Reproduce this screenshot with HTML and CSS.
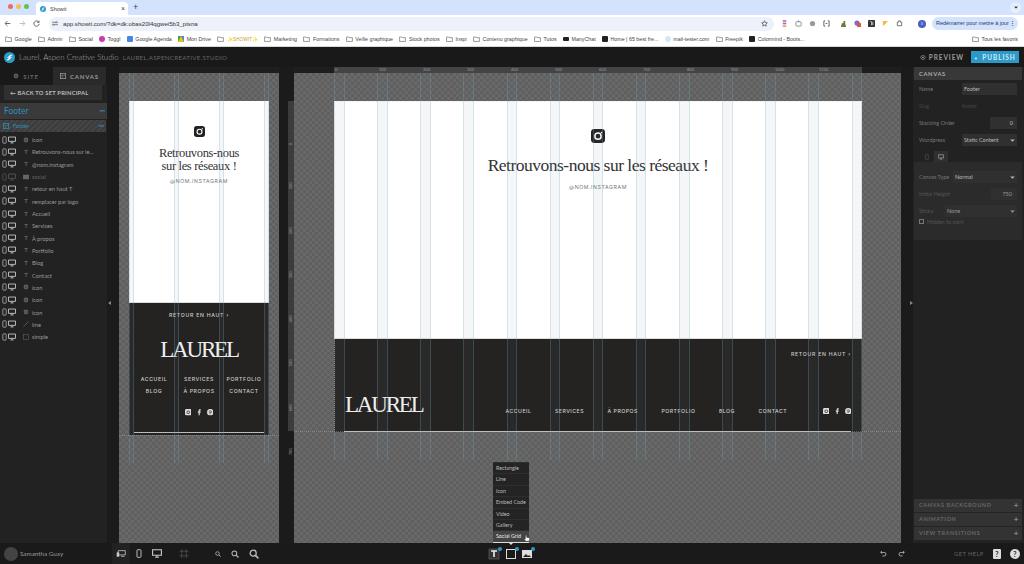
FILE: index.html
```html
<!DOCTYPE html>
<html lang="fr">
<head>
  <meta charset="UTF-8" />
  <title>Showit</title>
  <link rel="stylesheet" href="styles.css">
</head>
<body>
  <svg class="sprite" xmlns="http://www.w3.org/2000/svg">
    <symbol id="i-logo" viewBox="0 0 12 12"><circle cx="6" cy="6" r="6" fill="#2a9bcb"/><path d="M3 6.500l4-3.500h2.500L6 6zM9 5.500L5 9H2.500L6 6z" fill="#fff"/></symbol>
    <symbol id="i-folder" viewBox="0 0 12 10"><path d="M1 1.500h3.500l1 1.200H11v6.500H1z" fill="none" stroke="currentColor" stroke-width="1"/></symbol>
    <symbol id="i-phone" viewBox="0 0 6 9"><rect x="1" y="0.700" width="4" height="7.600" rx="0.700" fill="none" stroke="currentColor" stroke-width="0.900"/></symbol>
    <symbol id="i-desktop" viewBox="0 0 10 9"><path d="M0.600 0.800h8.800v5.400H0.600z" fill="none" stroke="currentColor" stroke-width="1.100"/><path d="M3 8.200h4M5 6.200v2" stroke="currentColor" stroke-width="1"/></symbol>
    <symbol id="i-globe" viewBox="0 0 8 8"><circle cx="4" cy="4" r="3.200" fill="currentColor"/><path d="M1 4h6M4 1v6" stroke="#222" stroke-width="0.500"/></symbol>
    <symbol id="i-insta" viewBox="0 0 14 14"><rect width="14" height="14" rx="3.400" fill="currentColor"/><circle cx="7" cy="7.200" r="3.100" fill="none" stroke="#fff" stroke-width="1.500"/><circle cx="10.600" cy="3.500" r="0.800" fill="#fff"/></symbol>
    <symbol id="i-small-insta" viewBox="0 0 8 8"><rect width="8" height="8" rx="1.800" fill="#ddd"/><circle cx="4" cy="4" r="1.700" fill="none" stroke="#252322" stroke-width="0.900"/></symbol>
    <symbol id="i-fb" viewBox="0 0 8 8"><path d="M3.200 8V4.500H2.200V3.200h1V2.200C3.200 1 3.900.4 5 .4h.9v1.300h-.6c-.5 0-.7.2-.7.6v.9h1.300l-.2 1.300H4.600V8z" fill="#ddd"/></symbol>
    <symbol id="i-pin" viewBox="0 0 8 8"><circle cx="4" cy="4" r="3.900" fill="#ddd"/><path d="M3.400 6.600l.8-3.400M2.800 4.300c-.7-1.200.2-2.200 1.300-2.200 1.200 0 1.800 1 1.400 2-.3.800-1.200 1-1.600.4" fill="none" stroke="#252322" stroke-width="0.700"/></symbol>
    <symbol id="i-zoom" viewBox="0 0 10 10"><circle cx="4.200" cy="4.200" r="3" fill="none" stroke="currentColor" stroke-width="1.300"/><path d="M6.400 6.400l3 3" stroke="currentColor" stroke-width="1.500"/></symbol>
    <symbol id="i-caret" viewBox="0 0 6 4"><path d="M0 0.500h6L3 3.800z" fill="currentColor"/></symbol>
  </svg>

  <div class="tabstrip">
    <div class="lights"><i class="red"></i><i class="amber"></i><i class="green"></i></div>
    <div class="tab">
      <svg class="fav"><use href="#i-logo"/></svg>
      <span class="tab-title">Showit</span>
      <span class="tab-close">×</span>
    </div>
    <span class="tab-new">+</span>
    <span class="tab-menu"><svg viewBox="0 0 6 4"><use href="#i-caret"/></svg></span>
  </div>

  <div class="toolbar">
    <svg class="nav-ico" viewBox="0 0 10 10"><path d="M9 5H2M5 1.500L1.500 5 5 8.500" fill="none" stroke="#444" stroke-width="1.100"/></svg>
    <svg class="nav-ico" viewBox="0 0 10 10"><path d="M1 5h7M5 1.500L8.500 5 5 8.500" fill="none" stroke="#aaa" stroke-width="1.100"/></svg>
    <svg class="nav-ico" viewBox="0 0 10 10"><path d="M8.300 3.200A3.800 3.800 0 1 0 8.800 5.500M8.600 1v2.500H6.100" fill="none" stroke="#444" stroke-width="1.100"/></svg>
    <div class="omnibox">
      <svg class="tune" viewBox="0 0 10 8"><path d="M0 2h6M8 2h2M0 6h2M4 6h6" stroke="#444" stroke-width="1"/><circle cx="7" cy="2" r="1.200" fill="none" stroke="#444" stroke-width=".8"/><circle cx="3" cy="6" r="1.200" fill="none" stroke="#444" stroke-width=".8"/></svg>
      <span class="url">app.showit.com/?dk=dk:obas20l4qgwei5b3_ptsna</span>
      <svg class="star" viewBox="0 0 10 10"><path d="M5 1l1.200 2.700 2.800.3-2.100 1.900.6 2.900L5 7.300 2.500 8.800l.6-2.900L1 4l2.800-.3z" fill="none" stroke="#444" stroke-width="1"/></svg>
    </div>
    <div class="exts">
      <svg viewBox="0 0 8 8"><rect x="2" y="0" width="4" height="2" fill="#ef5da8"/><rect x="2" y="3" width="4" height="2" fill="#7a7aee"/><rect x="2" y="6" width="4" height="2" fill="#f5a25d"/></svg>
      <svg viewBox="0 0 8 8"><rect x="1" y="2" width="6" height="5" rx="1" fill="none" stroke="#888"/><path d="M3 2l.5-1h1l.5 1" stroke="#888" fill="none"/></svg>
      <svg viewBox="0 0 8 8"><circle cx="4" cy="4" r="3" fill="#999"/></svg>
      <svg viewBox="0 0 8 8"><path d="M2.500 1H1v6h1.500M5.500 1H7v6H5.500M3 4h2" fill="none" stroke="#555"/></svg>
      <svg class="wide" viewBox="0 0 8 8"><path d="M1 8l1-4 2-1V1h2v3l1 4z" fill="#6c7a3e"/></svg>
      <svg viewBox="0 0 8 8"><circle cx="3.500" cy="3.500" r="3" fill="#7a68d8"/><rect x="3.500" y="3.500" width="4.500" height="4.500" fill="#e8542f"/></svg>
      <svg viewBox="0 0 8 8"><rect width="8" height="8" rx="1" fill="#333"/><path d="M2 2h2v4M5.500 2v4" stroke="#fff" stroke-width=".8"/></svg>
      <svg viewBox="0 0 8 8"><path d="M1 1h6L1 7z" fill="#f5b942"/></svg>
      <svg viewBox="0 0 8 8"><path d="M1.500 2.500h1.500V1h2v1.500h1.500v4h-5z" fill="none" stroke="#666"/></svg>
    </div>
    <span class="avatar">S</span>
    <div class="update"><span>Redémarrer pour mettre à jour</span><b>⋮</b></div>
  </div>

  <div class="bookmarks">
    <span class="bm"><svg class="folder"><use href="#i-folder"/></svg>Google</span>
    <span class="bm"><svg class="folder"><use href="#i-folder"/></svg>Admin</span>
    <span class="bm"><svg class="folder"><use href="#i-folder"/></svg>Social</span>
    <span class="bm"><i class="dot toggl"></i>Toggl</span>
    <span class="bm"><i class="dot agenda"></i>Google Agenda</span>
    <span class="bm"><i class="drive"></i>Mon Drive</span>
    <span class="bm"><svg class="folder"><use href="#i-folder"/></svg><em>✨SHOWIT✨</em></span>
    <span class="bm"><svg class="folder"><use href="#i-folder"/></svg>Marketing</span>
    <span class="bm"><svg class="folder"><use href="#i-folder"/></svg>Formations</span>
    <span class="bm"><svg class="folder"><use href="#i-folder"/></svg>Veille graphique</span>
    <span class="bm"><svg class="folder"><use href="#i-folder"/></svg>Stock photos</span>
    <span class="bm"><svg class="folder"><use href="#i-folder"/></svg>Inspi</span>
    <span class="bm"><svg class="folder"><use href="#i-folder"/></svg>Contenu graphique</span>
    <span class="bm"><svg class="folder"><use href="#i-folder"/></svg>Tutos</span>
    <span class="bm"><i class="dot many"></i>ManyChat</span>
    <span class="bm"><i class="dot home"></i>Home | 65 best fre...</span>
    <span class="bm"><i class="dot mail"></i>mail-tester.com</span>
    <span class="bm"><svg class="folder"><use href="#i-folder"/></svg>Freepik</span>
    <span class="bm"><i class="dot color"></i>Colormind - Boots...</span>
    <span class="bm bm-end"><svg class="folder"><use href="#i-folder"/></svg>Tous les favoris</span>
  </div>

  <header class="appbar">
    <svg class="logo"><use href="#i-logo"/></svg>
    <span class="site-name">Laurel, Aspen Creative Studio</span>
    <span class="site-url">LAUREL.ASPENCREATIVE.STUDIO</span>
    <span class="preview">
      <svg viewBox="0 0 10 7"><path d="M0.500 3.500C2 1 3.500.5 5 .5s3 .5 4.500 3C8 6 6.500 6.500 5 6.500S2 6 .5 3.500z" fill="none" stroke="#bbb"/><circle cx="5" cy="3.500" r="1.300" fill="#bbb"/></svg>
      PREVIEW
    </span>
    <button class="publish"><span>♦</span> PUBLISH</button>
  </header>

  <main class="workspace">
    <aside class="layers-panel">
      <div class="panel-tabs">
        <div class="panel-tab"><svg class="tab-ico" viewBox="0 0 8 8"><use href="#i-globe"/></svg>SITE</div>
        <div class="panel-tab active"><svg class="tab-ico" viewBox="0 0 8 8"><rect x=".5" y=".5" width="7" height="7" fill="none" stroke="currentColor"/><path d="M.5 3h7M3 3v4.500" stroke="currentColor" stroke-width=".7"/></svg>CANVAS</div>
      </div>
      <div class="back-set">← BACK TO SET PRINCIPAL</div>
      <div class="set-row"><span>Footer</span><b>•••</b></div>
      <div class="canvas-row"><svg viewBox="0 0 8 8"><rect x=".5" y=".5" width="7" height="7" fill="none" stroke="currentColor"/><path d="M.5 3h7M3 3v4.500" stroke="currentColor" stroke-width=".7"/></svg><span>Footer</span><b>•••</b></div>
      <ul class="layers">
        <li><svg class="l-phone"><use href="#i-phone"/></svg><svg class="l-desk"><use href="#i-desktop"/></svg><svg class="l-type"><use href="#i-globe"/></svg>icon</li>
        <li><svg class="l-phone"><use href="#i-phone"/></svg><svg class="l-desk"><use href="#i-desktop"/></svg><i class="l-type">T</i>Retrouvons-nous sur le...</li>
        <li><svg class="l-phone"><use href="#i-phone"/></svg><svg class="l-desk"><use href="#i-desktop"/></svg><i class="l-type">T</i>@nom.instagram</li>
        <li class="off"><svg class="l-phone"><use href="#i-phone"/></svg><svg class="l-desk"><use href="#i-desktop"/></svg><svg class="l-type" viewBox="0 0 8 8"><rect y="1" width="8" height="6" fill="currentColor"/></svg>social</li>
        <li><svg class="l-phone"><use href="#i-phone"/></svg><svg class="l-desk"><use href="#i-desktop"/></svg><i class="l-type">T</i>retour en haut T</li>
        <li><svg class="l-phone"><use href="#i-phone"/></svg><svg class="l-desk"><use href="#i-desktop"/></svg><i class="l-type">T</i>remplacer par logo</li>
        <li><svg class="l-phone"><use href="#i-phone"/></svg><svg class="l-desk"><use href="#i-desktop"/></svg><i class="l-type">T</i>Accueil</li>
        <li><svg class="l-phone"><use href="#i-phone"/></svg><svg class="l-desk"><use href="#i-desktop"/></svg><i class="l-type">T</i>Services</li>
        <li><svg class="l-phone"><use href="#i-phone"/></svg><svg class="l-desk"><use href="#i-desktop"/></svg><i class="l-type">T</i>À propos</li>
        <li><svg class="l-phone"><use href="#i-phone"/></svg><svg class="l-desk"><use href="#i-desktop"/></svg><i class="l-type">T</i>Portfolio</li>
        <li><svg class="l-phone"><use href="#i-phone"/></svg><svg class="l-desk"><use href="#i-desktop"/></svg><i class="l-type">T</i>Blog</li>
        <li><svg class="l-phone"><use href="#i-phone"/></svg><svg class="l-desk"><use href="#i-desktop"/></svg><i class="l-type">T</i>Contact</li>
        <li><svg class="l-phone"><use href="#i-phone"/></svg><svg class="l-desk"><use href="#i-desktop"/></svg><svg class="l-type"><use href="#i-globe"/></svg>icon</li>
        <li><svg class="l-phone"><use href="#i-phone"/></svg><svg class="l-desk"><use href="#i-desktop"/></svg><svg class="l-type"><use href="#i-globe"/></svg>icon</li>
        <li><svg class="l-phone"><use href="#i-phone"/></svg><svg class="l-desk"><use href="#i-desktop"/></svg><svg class="l-type"><use href="#i-globe"/></svg>icon</li>
        <li><svg class="l-phone"><use href="#i-phone"/></svg><svg class="l-desk"><use href="#i-desktop"/></svg><svg class="l-type" viewBox="0 0 8 8"><path d="M.5 7.500l7-7" stroke="currentColor"/></svg>line</li>
        <li><svg class="l-phone"><use href="#i-phone"/></svg><svg class="l-desk"><use href="#i-desktop"/></svg><svg class="l-type" viewBox="0 0 8 8"><rect x=".5" y=".5" width="7" height="7" fill="none" stroke="currentColor" stroke-width=".7"/></svg>simple</li>
      </ul>
    </aside>

    <div class="strip"><span class="arrow-l"></span></div>

    <section class="stage stage-mobile">
      <div class="guides guides-mobile"><i></i><i></i><i></i><i></i></div>
      <div class="board board-mobile">
        <div class="board-top">
          <svg class="insta"><use href="#i-insta"/></svg>
          <h2>Retrouvons-nous<br>sur les réseaux !</h2>
          <p class="handle">@NOM.INSTAGRAM</p>
        </div>
        <div class="board-foot">
          <p class="up">RETOUR EN HAUT ›</p>
          <div class="brand">LAUREL</div>
          <nav class="foot-grid">
            <span>ACCUEIL</span><span>SERVICES</span><span>PORTFOLIO</span>
            <span>BLOG</span><span>À PROPOS</span><span>CONTACT</span>
          </nav>
          <div class="socials">
            <svg><use href="#i-small-insta"/></svg><svg><use href="#i-fb"/></svg><svg><use href="#i-pin"/></svg>
          </div>
        </div>
      </div>
    </section>

    <div class="gap"></div>

    <section class="stage stage-desktop">
      <div class="ruler-top">
        <span>0</span><span>100</span><span>200</span><span>300</span><span>400</span><span>500</span><span>600</span><span>700</span><span>800</span><span>900</span><span>1000</span><span>1100</span>
      </div>
      <div class="ruler-left">
        <span>0</span><span>100</span><span>200</span><span>300</span><span>400</span><span>500</span><span>600</span><span>700</span>
      </div>
      <div class="guides guides-desktop"><i></i><i></i><i></i><i></i><i></i><i></i><i></i><i></i><i></i><i></i><i></i><i></i><i></i></div>
      <div class="board board-desktop">
        <div class="board-top">
          <svg class="insta"><use href="#i-insta"/></svg>
          <h2>Retrouvons-nous sur les réseaux !</h2>
          <p class="handle">@NOM.INSTAGRAM</p>
        </div>
        <div class="board-foot">
          <p class="up">RETOUR EN HAUT ›</p>
          <div class="foot-row">
            <div class="brand">LAUREL</div>
            <nav class="foot-nav">
              <span>ACCUEIL</span><span>SERVICES</span><span>À PROPOS</span><span>PORTFOLIO</span><span>BLOG</span><span>CONTACT</span>
            </nav>
            <div class="socials">
              <svg><use href="#i-small-insta"/></svg><svg><use href="#i-fb"/></svg><svg><use href="#i-pin"/></svg>
            </div>
          </div>
        </div>
      </div>
      <ul class="add-menu">
        <li>Rectangle</li><li>Line</li><li>Icon</li><li>Embed Code</li><li>Video</li><li>Gallery</li><li class="hover">Social Grid</li>
      </ul>
      <svg class="cursor" viewBox="0 0 10 10"><path d="M3 1.500v5L2 5.500 1.500 6.500 3.500 9h4L8.500 5 4.500 4V1.500z" fill="#fff" stroke="#222" stroke-width=".5"/></svg>
    </section>

    <div class="strip strip-right"><span class="arrow-r"></span></div>

    <aside class="props">
      <div class="props-head">CANVAS</div>
      <div class="prop"><label>Name</label><span class="field f-name">Footer</span></div>
      <div class="prop dim"><label>Slug</label><span class="plain">footer</span></div>
      <div class="prop"><label>Stacking Order</label><span class="field f-num">0</span></div>
      <div class="prop"><label>Wordpress</label><span class="field f-name select">Static Content<svg><use href="#i-caret"/></svg></span></div>
      <div class="view-tabs">
        <span class="view-tab"><svg><use href="#i-phone"/></svg></span>
        <span class="view-tab active"><svg><use href="#i-desktop"/></svg></span>
      </div>
      <div class="props-view">
        <div class="prop"><label>Canvas Type</label><span class="field f-type select">Normal<svg><use href="#i-caret"/></svg></span></div>
        <div class="prop dim2"><label>Initial Height</label><span class="field f-height">750</span></div>
        <div class="prop dim2"><label>Sticky</label><span class="field f-sticky select">None<svg><use href="#i-caret"/></svg></span></div>
        <div class="hidden-start"><i></i>Hidden to start</div>
      </div>
      <div class="accordion">
        <div>CANVAS BACKGROUND<b>+</b></div>
        <div>ANIMATION<b>+</b></div>
        <div>VIEW TRANSITIONS<b>+</b></div>
      </div>
    </aside>
  </main>

  <footer class="bottombar">
    <div class="user"><i class="user-pic"></i>Samantha Guay</div>
    <div class="view-btns">
      <span class="vb active"><svg viewBox="0 0 14 10"><path d="M3 1h10v6H3z" fill="none" stroke="#ccc" stroke-width="1.100"/><rect x="1" y="3.500" width="3.500" height="6" fill="#ccc"/><path d="M7 9h5" stroke="#ccc"/></svg></span>
      <span class="vb"><svg viewBox="0 0 6 9"><use href="#i-phone"/></svg></span>
      <span class="vb"><svg viewBox="0 0 10 9"><use href="#i-desktop"/></svg></span>
      <span class="vb crop"><svg viewBox="0 0 10 10"><path d="M2.500 0v10M7.500 0v10M0 2.500h10M0 7.500h10" stroke="#555" stroke-width=".8"/></svg></span>
    </div>
    <div class="zooms">
      <svg class="z1" viewBox="0 0 10 10"><use href="#i-zoom"/></svg>
      <svg class="z2" viewBox="0 0 10 10"><use href="#i-zoom"/></svg>
      <svg class="z3" viewBox="0 0 10 10"><use href="#i-zoom"/></svg>
    </div>
    <div class="adders">
      <span class="adder"><svg viewBox="0 0 12 12"><rect x="1" y="1" width="10" height="10" fill="#333" stroke="#777" stroke-width=".5"/><path d="M3 3h6M6 3v6" stroke="#eee" stroke-width="1.600"/></svg><i></i></span>
      <span class="adder"><svg viewBox="0 0 12 12"><rect x="1.500" y="1.500" width="9" height="9" fill="none" stroke="#ddd"/></svg><i></i></span>
      <span class="adder"><svg viewBox="0 0 12 12"><rect x="1" y="2" width="10" height="8" fill="#ddd"/><path d="M2 9l3-3 2 2 1-1 2 2z" fill="#222"/></svg><i></i></span>
    </div>
    <div class="history">
      <svg viewBox="0 0 10 10"><path d="M2.500 1.500L1 3.500l2 1.500M1.500 3.500H6a2.500 2.500 0 0 1 0 5H3.500" fill="none" stroke="#ccc" stroke-width="1.100"/></svg>
      <svg viewBox="0 0 10 10"><path d="M7.500 1.500l1.500 2-2 1.500M8.500 3.500H4a2.500 2.500 0 0 0 0 5h2.500" fill="none" stroke="#ccc" stroke-width="1.100"/></svg>
    </div>
    <span class="help-label">GET HELP</span>
    <span class="help-doc">?</span>
    <span class="help-bubble">?</span>
  </footer>
</body>
</html>
```

FILE: styles.css
```css
* {
  box-sizing: border-box;
}
html, body {
  margin: 0;
  padding: 0;
}
body {
  width: 1024px;
  height: 564px;
  overflow: hidden;
  display: flex;
  flex-direction: column;
  font-family: 'Lato', sans-serif;
  background-color: #1a1a1a;
  color: #aaa;
}
ul {
  list-style: none;
  margin: 0;
  padding: 0;
}
p, h2 {
  margin: 0;
  font-weight: normal;
}
.sprite {
  display: none;
}

/* browser chrome */
.tabstrip {
  height: 15px;
  flex: none;
  display: flex;
  align-items: flex-end;
  background-color: #d3e3fd;
}
.lights {
  display: flex;
  gap: 3.2px;
  width: 36px;
  height: 15px;
  padding: 3.5px 0 0 8px;
}
.lights i {
  width: 5px;
  height: 5px;
  border-radius: 50%;
}
.red { background-color: #ed6a5e; }
.amber { background-color: #f4bf4f; }
.green { background-color: #61c554; }
.tab {
  width: 92px;
  height: 13px;
  background-color: #fff;
  border-radius: 4px 4px 0 0;
  display: flex;
  align-items: center;
  padding: 0 3px 0 4px;
  font-family: 'Liberation Sans', sans-serif;
  font-size: 5.5px;
  color: #444;
}
.fav {
  width: 6px;
  height: 6px;
  margin-right: 4px;
}
.tab-title {
  flex: 1;
}
.tab-close {
  font-size: 7px;
}
.tab-new {
  margin: 0 0 1px 5px;
  font-size: 9px;
  line-height: 13px;
  color: #444;
  font-family: 'Liberation Sans', sans-serif;
}
.tab-menu {
  margin-left: auto;
  margin-right: 3px;
  align-self: center;
  width: 11px;
  height: 11px;
  border-radius: 50%;
  background-color: #e6eefb;
  display: flex;
  align-items: center;
  justify-content: center;
  color: #333;
}
.tab-menu svg {
  width: 4px;
  height: 3px;
}
.toolbar {
  height: 17px;
  flex: none;
  background-color: #fff;
  display: flex;
  align-items: center;
  padding-left: 4px;
}
.nav-ico {
  width: 7px;
  height: 7px;
  margin-right: 7.5px;
}
.omnibox {
  width: 725px;
  height: 14px;
  margin-left: 1.5px;
  border-radius: 7px;
  background-color: #edf2fa;
  display: flex;
  align-items: center;
  padding: 0 6px 0 3px;
}
.tune {
  width: 6px;
  height: 5px;
  margin-right: 5px;
}
.url {
  flex: 1;
  font-family: 'Liberation Sans', sans-serif;
  font-size: 6.1px;
  color: #333;
}
.star {
  width: 7px;
  height: 7px;
}
.exts {
  display: flex;
  align-items: center;
  gap: 7px;
  margin-left: 7px;
}
.exts svg {
  width: 7px;
  height: 7px;
}
.exts .wide {
  margin-left: 3px;
}
.avatar {
  width: 8px;
  height: 8px;
  border-radius: 50%;
  background-color: #4a5fc1;
  color: #cdd6ff;
  font-size: 4.5px;
  line-height: 8px;
  text-align: center;
  margin-left: 15px;
}
.update {
  width: 86px;
  height: 13px;
  margin-left: 6px;
  border-radius: 7px;
  background-color: #d3e3fd;
  color: #1f3a66;
  font-family: 'Liberation Sans', sans-serif;
  font-size: 5.4px;
  line-height: 13px;
  padding: 0 3px 0 4px;
  white-space: nowrap;
  display: flex;
  justify-content: space-between;
}
.bookmarks {
  height: 15px;
  flex: none;
  background-color: #fff;
  border-bottom: 1px solid #d8d8d8;
  display: flex;
  align-items: center;
  padding: 0 6px 0 5px;
  gap: 6.4px;
  font-family: 'Liberation Sans', sans-serif;
  font-size: 5.3px;
  color: #444;
  white-space: nowrap;
}
.bm {
  display: flex;
  align-items: center;
  gap: 2.5px;
}
.bm em {
  font-style: normal;
  color: #c9a227;
  font-size: 4.8px;
}
.bm-end {
  margin-left: auto;
}
.folder {
  width: 7px;
  height: 6px;
  color: #555;
}
.dot {
  width: 6px;
  height: 6px;
  border-radius: 50%;
}
.toggl { background-color: #c93bb0; }
.agenda { background-color: #4a86e8; border-radius: 1px; }
.many { background-color: #222; border-radius: 1px; height: 4px; }
.home { background-color: #222; border-radius: 1px; }
.mail { background-color: #d5e8f6; }
.color { background-color: #222; border-radius: 1px; }
.drive {
  width: 0;
  height: 0;
  border-left: 3px solid #34a853;
  border-right: 3px solid #4285f4;
  border-bottom: 6px solid #fbbc04;
}

/* app bar */
.appbar {
  height: 20px;
  flex: none;
  background-color: #191919;
  display: flex;
  align-items: center;
  padding-left: 4px;
}
.logo {
  width: 11px;
  height: 11px;
  margin-right: 4px;
}
.site-name {
  font-size: 7.9px;
  font-weight: 300;
  color: #a8a8a8;
  margin-right: 4px;
  white-space: nowrap;
}
.site-url {
  font-size: 6.2px;
  letter-spacing: .3px;
  color: #666;
  white-space: nowrap;
}
.preview {
  margin-left: auto;
  display: flex;
  align-items: center;
  gap: 3px;
  font-size: 6.5px;
  font-weight: 700;
  letter-spacing: .9px;
  color: #999;
}
.preview svg {
  width: 6px;
  height: 5px;
}
.publish {
  width: 48px;
  height: 12px;
  margin: 0 5px 0 7px;
  padding: 0;
  border: none;
  background-color: #2c9ac9;
  color: #cfeaf6;
  font-family: 'Lato', sans-serif;
  font-size: 6.5px;
  font-weight: 700;
  letter-spacing: .9px;
}
.publish span {
  font-size: 5px;
  margin-right: 2px;
}

/* main area */
.workspace {
  flex: 1;
  display: flex;
  min-height: 0;
  background-color: #1e1e1e;
}
.layers-panel {
  width: 107px;
  flex: none;
  background-color: #222;
  font-size: 5.7px;
}
.panel-tabs {
  display: flex;
  height: 18px;
  background-color: #191919;
}
.panel-tab {
  width: 52px;
  display: flex;
  align-items: center;
  justify-content: center;
  gap: 4px;
  font-size: 6px;
  font-weight: 700;
  letter-spacing: .8px;
  color: #666;
}
.panel-tab.active {
  margin-left: 1px;
  width: 53px;
  background-color: #2a2a2a;
  color: #999;
}
.tab-ico {
  width: 6px;
  height: 6px;
}
.back-set {
  height: 15px;
  margin: 0 5px 3px 4px;
  background-color: #303030;
  line-height: 15px;
  padding-left: 6px;
  font-size: 5.8px;
  font-weight: 700;
  color: #bbb;
  letter-spacing: .2px;
}
.set-row {
  height: 16px;
  background-color: #3a3a3a;
  display: flex;
  align-items: center;
  justify-content: space-between;
  padding: 0 2px 0 4px;
  color: #2a8fbd;
  font-size: 8.5px;
  margin-bottom: 1px;
}
.set-row b {
  font-size: 3px;
  letter-spacing: 0;
}
.canvas-row {
  height: 12px;
  margin-right: 1px;
  background: repeating-linear-gradient(135deg, #454545 0 2px, #3c3c3c 2px 4px);
  display: flex;
  align-items: center;
  padding: 0 2px 0 3px;
  color: #2a8fbd;
  font-size: 5.5px;
}
.canvas-row svg {
  width: 6px;
  height: 6px;
  margin-right: 4px;
}
.canvas-row b {
  margin-left: auto;
  font-size: 3px;
}
.layers {
  padding-top: 1.5px;
}
.layers li {
  height: 12.32px;
  display: flex;
  align-items: center;
  padding-left: 2px;
  color: #999;
  white-space: nowrap;
}
.layers li.off {
  color: #666;
}
.l-phone {
  width: 5px;
  height: 8px;
  color: #bbb;
  margin-right: 1px;
}
.l-desk {
  width: 8px;
  height: 8px;
  color: #ccc;
  margin-right: 7px;
}
.off .l-phone, .off .l-desk {
  color: #555;
}
.l-type {
  width: 6px;
  height: 6px;
  margin-right: 3px;
  color: #666;
  font-style: normal;
  font-weight: 700;
  line-height: 6px;
  text-align: center;
  font-size: 6px;
}
.strip {
  width: 12px;
  flex: none;
  background-color: #1b1b1b;
  position: relative;
}
.arrow-l, .arrow-r {
  position: absolute;
  top: 234px;
  width: 0;
  height: 0;
  border-top: 2.5px solid transparent;
  border-bottom: 2.5px solid transparent;
}
.arrow-l {
  left: 1px;
  border-right: 3px solid #888;
}
.arrow-r {
  right: 0;
  border-left: 3px solid #888;
}
.gap {
  width: 15px;
  flex: none;
  background-color: #1b1b1b;
}

/* canvases */
.stage {
  position: relative;
  flex: none;
  margin-top: 6px;
  height: 470px;
  background: repeating-conic-gradient(#696969 0 25%, #5f5f5f 0 50%) 0 0 / 6px 6px;
}
.stage-mobile {
  width: 160px;
  padding: 28px 0 0 10px;
}
.stage-desktop {
  width: 607px;
  padding: 28px 0 0 40px;
}
.stage::after {
  content: "";
  position: absolute;
  left: 0;
  right: 0;
  z-index: 3;
  border-top: 1px dotted rgba(210, 210, 210, .3);
}
.stage-mobile::after {
  top: 362px;
}
.stage-desktop::after {
  top: 358px;
}
.stage-desktop::before {
  content: "";
  position: absolute;
  left: 40px;
  top: 28px;
  width: 528px;
  height: 330px;
  z-index: 3;
  border-top: 1px dotted rgba(210, 210, 210, .45);
  border-left: 1px dotted rgba(210, 210, 210, .45);
}
.guides {
  position: absolute;
  top: 0;
  z-index: 2;
  pointer-events: none;
  display: flex;
  justify-content: space-between;
}
.guides i {
  background-color: rgba(100, 130, 140, .07);
  border-left: 1px solid rgba(120, 170, 195, .26);
  border-right: 1px solid rgba(120, 170, 195, .26);
}
.guides-mobile {
  left: 10px;
  width: 140px;
  height: 390px;
}
.guides-mobile i {
  width: 5px;
}
.guides-desktop {
  left: 40px;
  width: 528px;
  height: 387px;
}
.guides-desktop i {
  width: 10.5px;
}
.board {
  position: relative;
  display: flex;
  flex-direction: column;
  background-color: #fff;
  font-family: 'Inter', sans-serif;
  color: #333;
}
.board-mobile {
  width: 140px;
  height: 334px;
}
.board-desktop {
  width: 528px;
  height: 331px;
}
.board-top {
  display: flex;
  flex-direction: column;
  align-items: center;
  text-align: center;
}
.board-mobile .board-top {
  height: 201px;
  padding-top: 25px;
}
.board-desktop .board-top {
  height: 237px;
  padding-top: 28px;
}
.insta {
  color: #222;
}
.board-mobile .insta {
  width: 11px;
  height: 11px;
}
.board-desktop .insta {
  width: 14px;
  height: 14px;
}
.board-top h2 {
  font-family: 'Liberation Serif', serif;
  color: #333;
}
.board-mobile h2 {
  font-size: 12.5px;
  line-height: 12.5px;
  letter-spacing: -.35px;
  margin-top: 10px;
}
.board-desktop h2 {
  font-size: 17.5px;
  line-height: 20px;
  letter-spacing: -.5px;
  margin-top: 12px;
}
.handle {
  font-size: 5.2px;
  letter-spacing: .6px;
  color: #777;
}
.board-mobile .handle {
  margin-top: 6px;
}
.board-desktop .handle {
  margin-top: 9px;
}
.board-foot {
  flex: 1;
  background-color: #252322;
  color: #ccc;
  border-top: 1px solid #ddd;
}
.up {
  font-size: 5.2px;
  font-weight: 500;
  letter-spacing: .7px;
  white-space: nowrap;
}
.brand {
  font-family: 'Liberation Serif', serif;
  color: #eee;
  font-size: 23px;
  line-height: 24px;
  letter-spacing: -2.2px;
}
.socials {
  display: flex;
  gap: 4.5px;
}
.socials svg {
  width: 6.5px;
  height: 6.5px;
}
.board-mobile .board-foot {
  display: flex;
  flex-direction: column;
  align-items: center;
  padding-top: 9px;
  position: relative;
}
.board-mobile .brand {
  margin-top: 20px;
}
.foot-grid {
  display: grid;
  grid-template-columns: repeat(3, 45px);
  row-gap: 6px;
  margin-top: 14px;
  font-size: 5.2px;
  font-weight: 500;
  letter-spacing: .6px;
  line-height: 6px;
  text-align: center;
  white-space: nowrap;
}
.board-mobile .socials {
  margin-top: 15px;
}
.board-foot::after {
  content: "";
  position: absolute;
  height: 1px;
  background-color: #bbb;
}
.board-mobile .board-foot::after {
  left: 5px;
  right: 5px;
  top: 129px;
}
.board-desktop .board-foot {
  position: relative;
  padding: 12px 11px 0 11px;
}
.board-desktop .board-foot::after {
  left: 10px;
  right: 11px;
  top: 92px;
}
.board-desktop .up {
  text-align: right;
}
.foot-row {
  display: flex;
  align-items: flex-start;
  margin-top: 36px;
}
.foot-nav {
  display: flex;
  gap: 23.5px;
  margin-left: 83px;
  margin-top: 15px;
  font-size: 5.2px;
  font-weight: 500;
  letter-spacing: .5px;
  white-space: nowrap;
}
.board-desktop .socials {
  margin-left: auto;
  margin-top: 14.5px;
}
.ruler-top {
  position: absolute;
  left: 40px;
  top: -6px;
  width: 528px;
  height: 6px;
  background-color: #444;
  display: flex;
  font-size: 4px;
  line-height: 6px;
  color: #999;
}
.ruler-top span {
  width: 44.3px;
  padding-left: 1px;
}
.ruler-left {
  position: absolute;
  left: -6px;
  top: 28px;
  width: 6px;
  height: 330px;
  background-color: #3c3c3c;
  display: flex;
  flex-direction: column;
  font-size: 4px;
  line-height: 6px;
  color: #999;
}
.ruler-left span {
  height: 44.3px;
  flex: none;
  writing-mode: vertical-rl;
  transform: rotate(180deg);
  text-align: left;
}
.add-menu {
  position: absolute;
  left: 199px;
  top: 389px;
  width: 36px;
  z-index: 3;
  background-color: #242424;
  border-bottom: 1px solid #ddd;
  font-size: 5.3px;
  color: #bbb;
}
.add-menu::after {
  content: "";
  position: absolute;
  left: 15px;
  top: 100%;
  border-left: 3px solid transparent;
  border-right: 3px solid transparent;
  border-top: 3px solid #ddd;
}
.add-menu li {
  height: 11.4px;
  line-height: 11.4px;
  padding-left: 3px;
  border-top: 1px solid #2e2e2e;
}
.add-menu .hover {
  background-color: #444;
  color: #eee;
}
.cursor {
  position: absolute;
  left: 229px;
  top: 461px;
  z-index: 4;
  width: 8px;
  height: 8px;
}

/* canvas properties */
.props {
  width: 111px;
  flex: none;
  padding: 0 2px 2px 1px;
  display: flex;
  flex-direction: column;
  font-size: 5.5px;
  background-color: #222;
}
.props-head {
  height: 13px;
  line-height: 13px;
  padding-left: 5px;
  background-color: #383838;
  font-size: 5.8px;
  font-weight: 700;
  letter-spacing: .6px;
  color: #aaa;
}
.prop {
  display: flex;
  align-items: center;
  height: 17px;
  padding: 0 5px;
  color: #777;
}
.prop label {
  margin-right: auto;
}
.dim {
  color: #444;
}
.dim .plain {
  width: 55px;
}
.dim2 {
  color: #555;
}
.field {
  height: 12px;
  line-height: 12px;
  background-color: #303030;
  color: #bbb;
  padding-left: 2px;
  position: relative;
  white-space: nowrap;
}
.select svg {
  position: absolute;
  right: 2px;
  top: 5px;
  width: 5px;
  height: 3px;
}
.f-name { width: 55px; }
.f-num { width: 27px; text-align: right; padding-right: 4px; }
.f-type { width: 64px; }
.f-height { width: 26px; text-align: right; padding-right: 5px; color: #999; }
.f-sticky { width: 72px; color: #999; }
.view-tabs {
  display: flex;
  height: 11px;
  padding-left: 6px;
  margin-top: 3px;
}
.view-tab {
  width: 14px;
  display: flex;
  align-items: center;
  justify-content: center;
  color: #555;
}
.view-tab.active {
  background-color: #303030;
  color: #aaa;
}
.view-tab svg {
  width: 6px;
  height: 6px;
}
.props-view {
  background-color: #2b2b2b;
  padding-top: 6.5px;
  height: 78px;
}
.hidden-start {
  display: flex;
  align-items: center;
  gap: 3px;
  padding-left: 5px;
  margin-top: -1px;
  color: #555;
}
.hidden-start i {
  width: 5px;
  height: 5px;
  border: 1px solid #777;
}
.accordion {
  margin-top: auto;
}
.accordion div {
  height: 14px;
  line-height: 13px;
  padding: 0 3px 0 5px;
  display: flex;
  justify-content: space-between;
  background-color: #333;
  border-bottom: 1px solid #242424;
  font-size: 5.5px;
  font-weight: 700;
  letter-spacing: .6px;
  color: #666;
}
.accordion b {
  font-size: 8px;
  color: #888;
}

/* bottom bar */
.bottombar {
  height: 21px;
  flex: none;
  background-color: #1a1a1a;
  display: flex;
  align-items: center;
  font-size: 6.3px;
  color: #999;
}
.user {
  width: 112px;
  display: flex;
  align-items: center;
  gap: 2px;
  padding-left: 4px;
}
.user-pic {
  width: 14px;
  height: 14px;
  border-radius: 50%;
  background-color: #444;
}
.view-btns {
  display: flex;
  align-items: stretch;
  height: 21px;
}
.vb {
  width: 18px;
  display: flex;
  align-items: center;
  justify-content: center;
  color: #ccc;
}
.vb.active {
  background-color: #222;
}
.vb svg {
  width: 10px;
  height: 9px;
}
.vb.crop {
  margin-left: 9px;
}
.zooms {
  display: flex;
  align-items: center;
  margin-left: 22px;
  color: #bbb;
}
.zooms svg {
  margin-right: 10px;
}
.z1 { width: 6px; height: 6px; }
.z2 { width: 8px; height: 8px; }
.z3 { width: 10px; height: 10px; }
.adders {
  display: flex;
  gap: 4.5px;
  margin-left: 219px;
}
.adder {
  position: relative;
  width: 12px;
  height: 12px;
}
.adder svg {
  width: 12px;
  height: 12px;
}
.adder i {
  position: absolute;
  right: -2px;
  top: -1px;
  width: 4px;
  height: 4px;
  border-radius: 50%;
  background-color: #2c9ac9;
}
.history {
  display: flex;
  gap: 11px;
  margin-left: 347px;
}
.history svg {
  width: 7px;
  height: 7px;
}
.help-label {
  margin-left: 49px;
  font-size: 5.8px;
  letter-spacing: .4px;
  color: #666;
}
.help-doc {
  margin-left: 9px;
  width: 8px;
  height: 10px;
  background-color: #ddd;
  color: #222;
  font-size: 7px;
  line-height: 10px;
  font-weight: 700;
  text-align: center;
  border-radius: 1px;
}
.help-bubble {
  margin-left: 9px;
  width: 10px;
  height: 10px;
  border-radius: 50%;
  background-color: #ddd;
  color: #222;
  font-size: 7px;
  line-height: 10px;
  font-weight: 700;
  text-align: center;
}
```
